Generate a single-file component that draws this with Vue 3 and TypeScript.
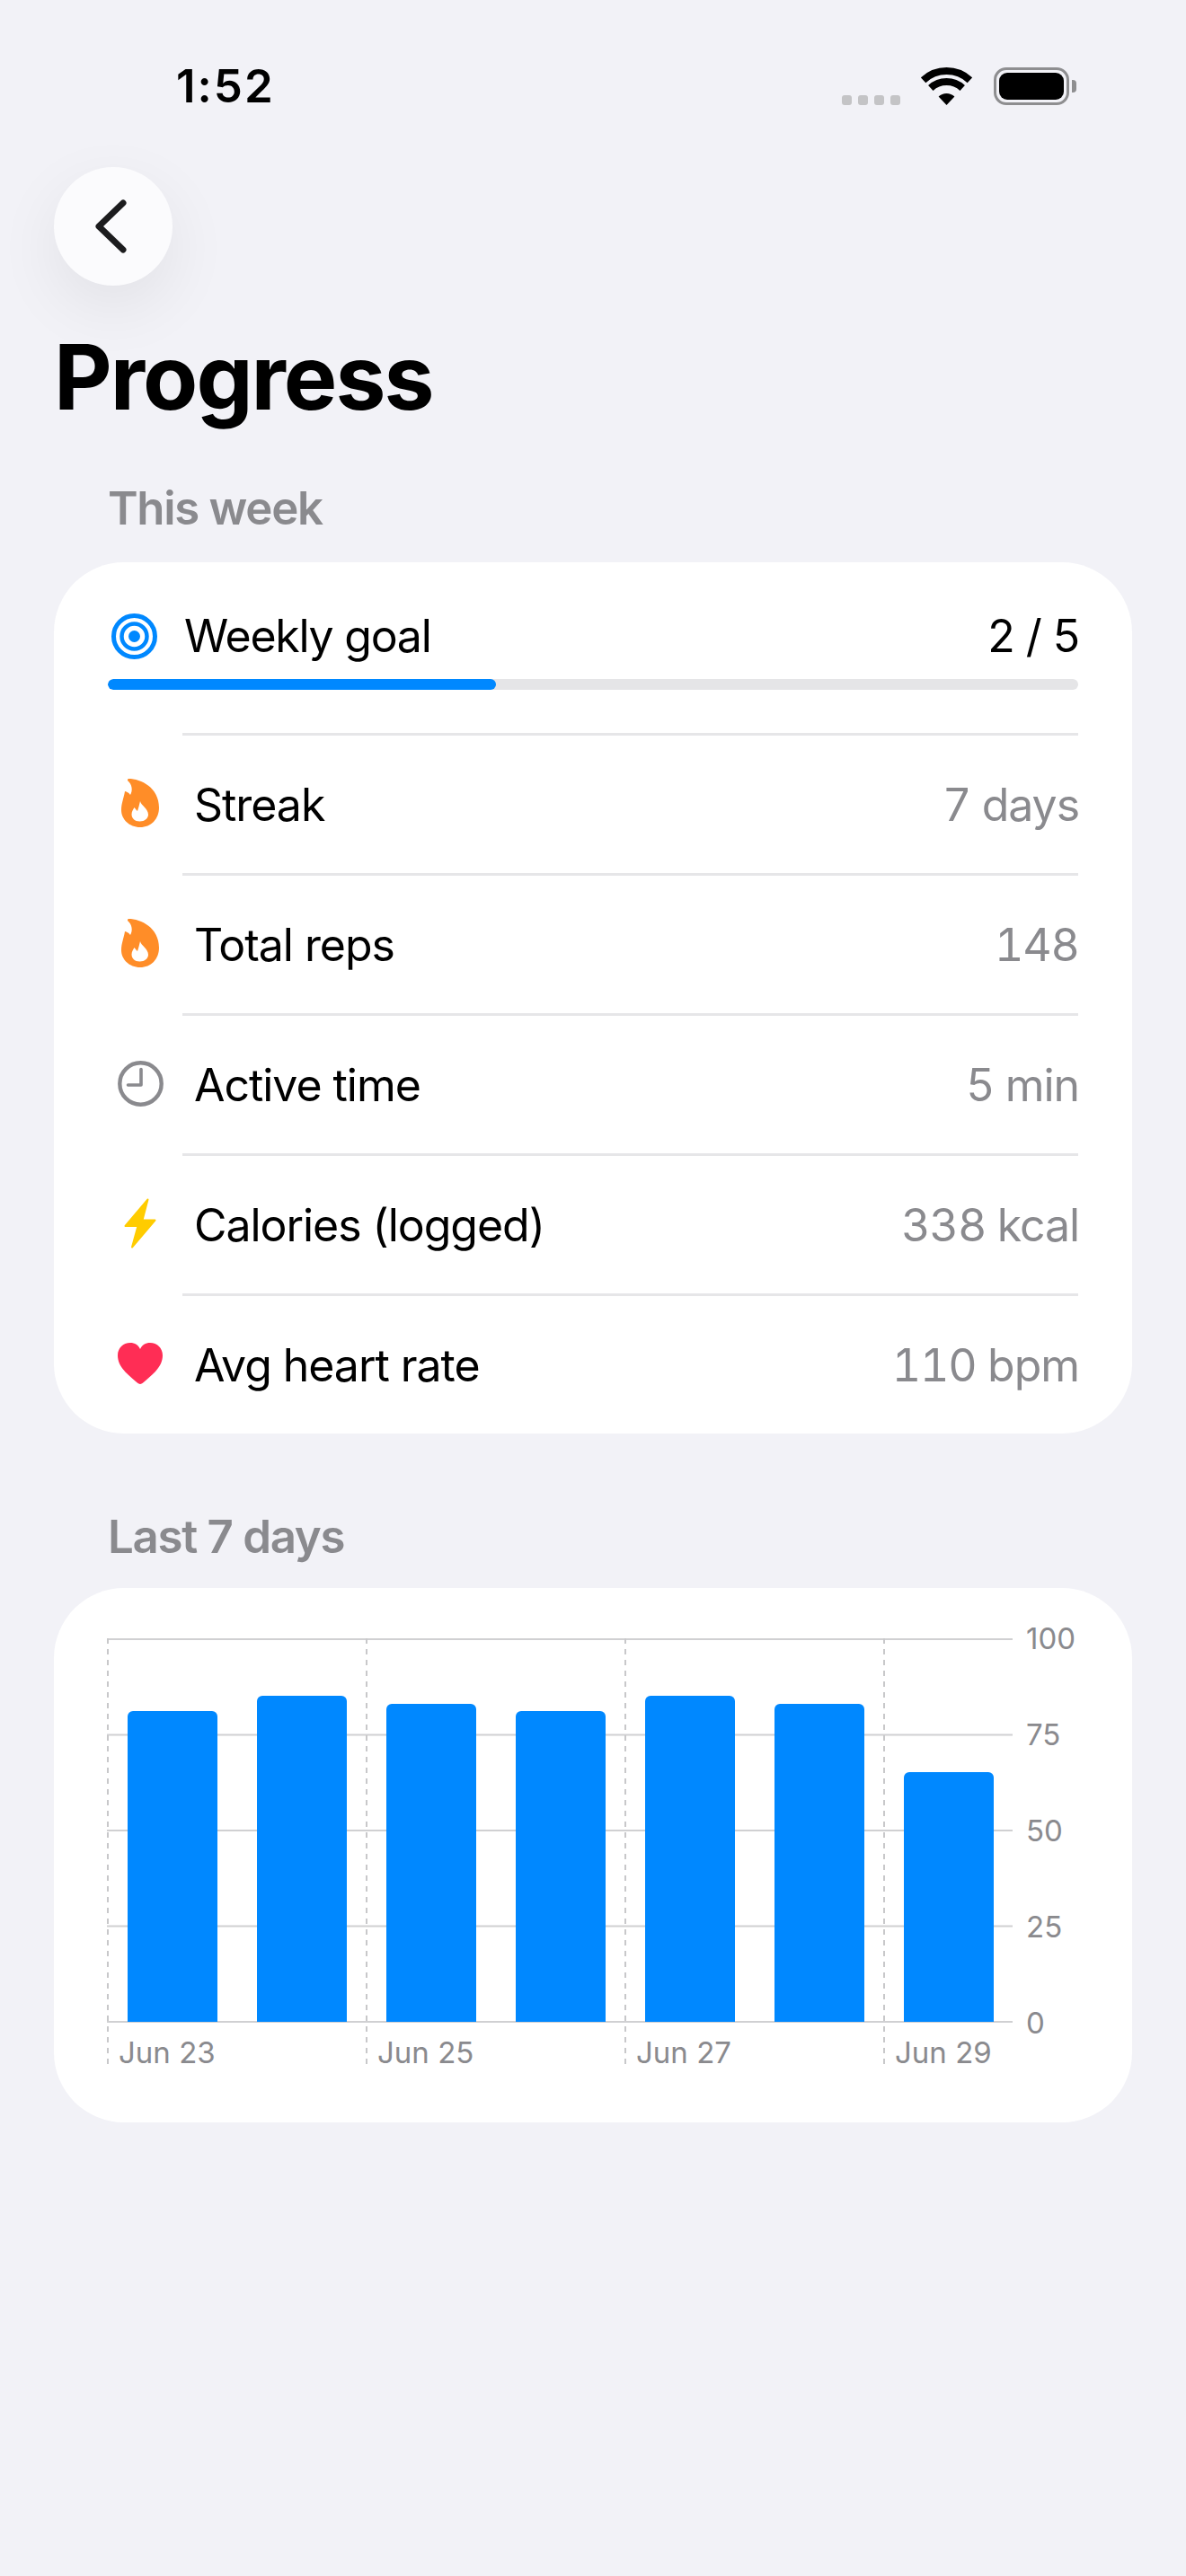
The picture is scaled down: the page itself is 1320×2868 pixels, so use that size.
<script setup lang="ts">
const rows = [
  { icon: 'flame', label: 'Streak', value: '7 days' },
  { icon: 'flame', label: 'Total reps', value: '148' },
  { icon: 'clock', label: 'Active time', value: '5 min' },
  { icon: 'bolt', label: 'Calories (logged)', value: '338 kcal' },
  { icon: 'heart', label: 'Avg heart rate', value: '110 bpm' },
]

const bars = [81, 85, 83, 81, 85, 83, 65]
const dates = ['Jun 23', 'Jun 25', 'Jun 27', 'Jun 29']
const ticks = [100, 75, 50, 25, 0]
const gridY = [1, 107.5, 214, 320.5, 427]
const dashX = [1, 289, 577, 865]
</script>

<template>
  <div class="page">
    <div class="status">
      <span class="time">1:52</span>
      <div class="status-right">
        <div class="dots"><i></i><i></i><i></i><i></i></div>
        <svg class="wifi" width="57" height="42" viewBox="0 0 57 42">
          <path d="M2.6 14.2A38 38 0 0 1 54.4 14.2" fill="none" stroke="#000" stroke-width="8" />
          <path d="M10.8 23A26 26 0 0 1 46.2 23" fill="none" stroke="#000" stroke-width="8" />
          <path d="M28.5 42L19.6 32.5A13 13 0 0 1 37.4 32.5Z" fill="#000" />
        </svg>
        <div class="battery">
          <div class="battery-body"><div class="battery-fill"></div></div>
          <div class="battery-cap"></div>
        </div>
      </div>
    </div>

    <button class="back" type="button" aria-label="Back">
      <svg width="36" height="60" viewBox="0 0 36 60">
        <path d="M32 4L5 30L32 56" fill="none" stroke="#1c1c1e" stroke-width="7" stroke-linecap="round" stroke-linejoin="round" />
      </svg>
    </button>

    <h1 class="title">Progress</h1>

    <h2 class="section">This week</h2>
    <section class="card list">
      <div class="goal">
        <div class="goal-head">
          <svg class="target" width="51" height="51" viewBox="0 0 51 51">
            <circle cx="25.5" cy="25.5" r="23" fill="none" stroke="#0088ff" stroke-width="5" />
            <circle cx="25.5" cy="25.5" r="14" fill="none" stroke="#0088ff" stroke-width="4.5" />
            <circle cx="25.5" cy="25.5" r="6.5" fill="#0088ff" />
          </svg>
          <span class="goal-label">Weekly goal</span>
          <span class="goal-value">2 / 5</span>
        </div>
        <div class="track"><div class="track-fill" :style="{ width: (2 / 5) * 100 + '%' }"></div></div>
      </div>

      <div v-for="row in rows" :key="row.label" class="row">
        <div class="row-icon">
          <svg v-if="row.icon === 'flame'" width="42" height="54" viewBox="0 0 42 54">
            <path d="M8 0C22 0 42 10 42 32C42 45 33 54 21 54C9 54 0 45 0 35C0 27 3 21 4 14C5 14 8 15 10 18C13 13 12 6 7 2C7 1 7 0 8 0Z" fill="#ff8d28" />
            <path d="M21 25C22 30 30 33 30 40C30 44 26 47.5 20.5 47.5C15 47.5 11.5 44 11.5 39.5C11.5 36 13.5 34 14.5 32C15.5 33.5 17 35 18 36C19 33 20 29 21 25Z" fill="#fff" />
          </svg>
          <svg v-else-if="row.icon === 'clock'" width="51" height="51" viewBox="0 0 51 51">
            <circle cx="25.5" cy="25.5" r="23.2" fill="none" stroke="#8a8a8e" stroke-width="4.4" />
            <path d="M26 9.5V27H11.5" fill="none" stroke="#8a8a8e" stroke-width="3.6" stroke-linecap="round" stroke-linejoin="round" />
          </svg>
          <svg v-else-if="row.icon === 'bolt'" width="36" height="56" viewBox="0 0 36 56">
            <path d="M26.5 1.5L1.5 31H15.5L9 54.5L34.5 24.5H20.5Z" fill="#ffcc00" stroke="#ffcc00" stroke-width="2" stroke-linejoin="round" />
          </svg>
          <svg v-else width="50" height="46" viewBox="0 0 50 46">
            <path d="M25 46C24 46 22 45 20 43C8 33 0 25 0 14C0 6 6 0 14 0C19 0 23 2.5 25 7C27 2.5 31 0 36 0C44 0 50 6 50 14C50 25 42 33 30 43C28 45 26 46 25 46Z" fill="#ff2d55" />
          </svg>
        </div>
        <div class="row-body">
          <span class="row-label">{{ row.label }}</span>
          <span class="row-value">{{ row.value }}</span>
        </div>
      </div>
    </section>

    <h2 class="section section--chart">Last 7 days</h2>
    <section class="card card--chart chart">
      <div class="plot">
        <svg class="grid" width="1010" height="478" viewBox="0 0 1010 478">
          <line v-for="y in gridY" :key="y" x1="0" x2="1008" :y1="y" :y2="y" stroke="#d0d0d2" stroke-width="2" />
          <line v-for="x in dashX" :key="x" :x1="x" :x2="x" y1="0" y2="476" stroke="#c8c8ca" stroke-width="2" stroke-dasharray="6 6" />
        </svg>
        <div class="bars">
          <div v-for="(b, i) in bars" :key="i" class="bar" :style="{ height: b + '%' }"></div>
        </div>
        <div class="dates">
          <span v-for="d in dates" :key="d" class="date">{{ d }}</span>
        </div>
      </div>
      <div class="ticks">
        <span v-for="t in ticks" :key="t" class="tick">{{ t }}</span>
      </div>
    </section>
  </div>
</template>

<style>
html,
body {
  margin: 0;
  background: #f2f2f7;
}
</style>

<style scoped>
.page {
  width: 1320px;
  height: 2868px;
  box-sizing: border-box;
  padding: 0 60px;
  background: #f2f2f7;
  color: #000;
  font-family: Inter, "Liberation Sans", sans-serif;
  overflow: hidden;
}

.status {
  display: flex;
  justify-content: space-between;
  align-items: flex-end;
  height: 42px;
  padding: 75px 62px 0 136px;
}
.time {
  font-size: 51px;
  font-weight: 600;
  line-height: 42px;
  letter-spacing: 2px;
}
.status-right {
  display: flex;
  align-items: flex-end;
}
.dots {
  display: flex;
  gap: 7px;
  margin-right: 23px;
}
.dots i {
  width: 11px;
  height: 11px;
  border-radius: 3px;
  background: #c4c4c6;
}
.wifi {
  display: block;
  margin-right: 24px;
}
.battery {
  display: flex;
  align-items: center;
  gap: 3px;
}
.battery-body {
  width: 84px;
  height: 42px;
  box-sizing: border-box;
  padding: 3px;
  border: 3px solid #8e8e90;
  border-radius: 14px;
}
.battery-fill {
  height: 100%;
  background: #000;
  border-radius: 9px;
}
.battery-cap {
  width: 5px;
  height: 14px;
  background: #8e8e90;
  border-radius: 0 4px 4px 0;
}

.back {
  display: flex;
  align-items: center;
  justify-content: center;
  width: 132px;
  height: 132px;
  margin-top: 69px;
  padding: 0 6px 0 0;
  border: 0;
  border-radius: 50%;
  background: #fbfbfd;
  box-shadow: 0 24px 72px rgba(0, 0, 0, 0.07);
}

.title {
  margin: 42px 0 0;
  font-size: 100px;
  font-weight: 700;
  line-height: 120px;
  letter-spacing: -2px;
}

.section {
  margin: 55px 0 0 60px;
  font-size: 51px;
  font-weight: 600;
  line-height: 62px;
  color: #8a8a8e;
  letter-spacing: -1.3px;
}
.section--chart {
  margin-top: 84px;
}

.card {
  margin-top: 29px;
  background: #fff;
  border-radius: 78px;
}
.card--chart {
  margin-top: 26px;
}
.list {
  padding: 0 60px;
}

.goal {
  height: 190px;
  box-sizing: border-box;
  padding-top: 51px;
}
.goal-head {
  display: flex;
  align-items: center;
  height: 62px;
  padding-left: 4px;
}
.target {
  display: block;
  margin-right: 30px;
}
.goal-label {
  flex: 1;
  font-size: 50px;
  line-height: 62px;
  letter-spacing: -1.25px;
}
.goal-value {
  font-size: 50px;
  line-height: 62px;
  letter-spacing: -1.05px;
  margin-right: -1px;
}
.track {
  height: 12px;
  margin-top: 17px;
  background: #e5e5e7;
  border-radius: 6px;
  overflow: hidden;
}
.track-fill {
  height: 100%;
  background: #0088ff;
  border-radius: 6px;
}

.row {
  display: flex;
  align-items: stretch;
}
.row-icon {
  display: flex;
  align-items: center;
  justify-content: center;
  width: 72px;
  flex: none;
  margin-right: 11px;
}
.row-icon svg {
  display: block;
}
.row-body {
  flex: 1;
  display: flex;
  justify-content: space-between;
  align-items: center;
  height: 156px;
  box-sizing: border-box;
  padding-left: 13px;
  border-top: 3px solid #e6e6e8;
}
.row-label {
  font-size: 50px;
  line-height: 62px;
  letter-spacing: -1.05px;
}
.row-value {
  font-size: 50px;
  line-height: 62px;
  letter-spacing: -1.05px;
  margin-right: -1px;
  color: #8a8a8e;
  font-variant-numeric: tabular-nums;
}

.chart {
  display: flex;
  height: 595px;
  box-sizing: border-box;
  padding: 56px 0 0 60px;
}
.plot {
  position: relative;
  width: 1008px;
  height: 428px;
}
.grid {
  position: absolute;
  left: -1px;
  top: 0;
}
.bars {
  position: relative;
  display: flex;
  gap: 44px;
  align-items: flex-end;
  height: 427px;
  padding-left: 22px;
}
.bar {
  width: 100px;
  background: #0088ff;
  border-radius: 6px 6px 0 0;
}
.dates {
  position: relative;
  display: flex;
  gap: 184px;
  padding-left: 12px;
  margin-top: 14px;
}
.date {
  width: 104px;
  font-size: 33px;
  line-height: 40px;
  color: #8a8a8e;
  white-space: nowrap;
}
.ticks {
  display: flex;
  flex-direction: column;
  justify-content: space-between;
  height: 428px;
  padding-left: 14px;
}
.tick {
  height: 0;
  font-size: 33px;
  line-height: 0;
  color: #8a8a8e;
}
</style>
